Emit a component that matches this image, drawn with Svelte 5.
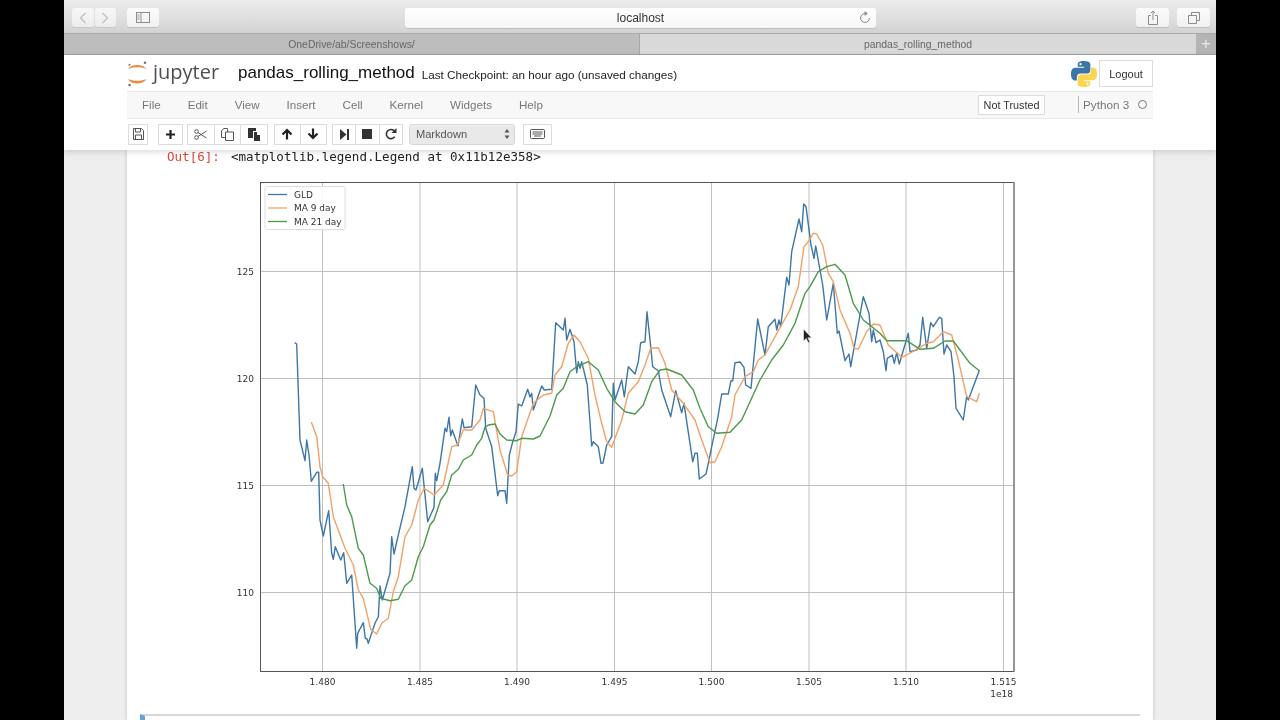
<script>
  const blue = [[294.7,342.7],[296.7,344],[299.3,420],[300,440],[305,460.7],[306.7,440],[309,455],[311.3,481.3],[316.7,472.3],[318.7,472.3],[320,520],[323.3,536],[328.7,510.7],[331.7,553.3],[333.3,559.3],[335.3,546.7],[340.7,560],[343.7,552.7],[346.7,583.3],[351.7,575],[356.7,648.3],[357.7,633.3],[363.3,622.7],[365.3,638.3],[367,639],[368.3,643.3],[375,623.3],[378.3,616.7],[380,586],[382.3,600],[390,573.3],[391.7,536.7],[394,554],[398.3,535],[405,506.7],[412.3,466.7],[414,488.3],[416,490],[422.3,468.3],[427.7,521.7],[434,507.3],[435.3,473.3],[436.7,480.7],[440,463.3],[445,428.3],[446.7,431.7],[449,417.3],[450.7,435.7],[452.3,430],[458,446],[462.3,419],[464,427.7],[471.7,426.7],[475.7,385],[480,395],[484,398.3],[485.7,428.3],[491.7,446.7],[497.7,495.7],[499.3,490.7],[505,490.7],[506.7,503.3],[509.3,455],[512.3,443.3],[516,431.7],[518.3,404],[521.7,406],[527.7,389.3],[530,397],[531.7,393.3],[533.3,410],[541.7,386],[544.3,390],[551.7,389.3],[555.7,322.7],[563.3,330],[565,318.3],[566.7,340],[570,329.3],[574,341.7],[576.7,372.7],[578.3,361.7],[580,368.3],[581.7,361.7],[587.3,385],[591.7,446],[593.3,441.7],[598.3,446.7],[601,463.3],[603,463],[606.7,445],[611.7,436.7],[613.3,383.3],[615,400],[621.7,380],[624.3,396.7],[628.3,366.7],[635,374],[638.3,361.7],[640.7,342.7],[645,341.7],[647,311.7],[650,340],[652.7,366.7],[658.3,370.7],[661.7,390],[670.7,416.7],[675.7,390.7],[681.7,412.7],[684,403.3],[692.7,461.7],[695,453.3],[697.3,453.3],[699.3,479],[706,474],[708.3,463.3],[711.7,446.7],[717.7,418.3],[721.7,394],[728.3,394],[731,380.7],[732.7,380.7],[735,362.7],[740,362],[744,367.3],[745.7,385],[751,388.3],[757.7,319],[765,355],[768.3,326.7],[775,319.3],[776.7,330],[779,320],[780.7,326.7],[786.7,277.3],[789,285],[791.7,251.7],[799,219],[801.7,231.7],[803.7,204],[806,206.7],[811,245],[814,258.3],[815.7,246],[822.7,285],[826.7,320],[833.3,283.3],[837.3,333.3],[839,331],[845,360.7],[849,354],[850.7,366.7],[863.3,296.7],[869,313.3],[871.7,341.7],[873.3,330],[876,342.7],[880,340],[883.3,351.7],[886,370.7],[887.3,358.3],[892.3,355],[894.3,363.3],[896.7,352.7],[899.3,364],[908.3,333.3],[910,351.7],[916.7,350],[920,345],[922.7,317.3],[926.7,348.3],[930.7,322.7],[933.3,326.7],[939.3,317.3],[941.7,318.3],[944,354],[946.7,345],[951,351.7],[954,376.7],[956,408.3],[963.3,420],[966.7,396],[968.3,400],[978.3,373.3],[979.3,370]];
  const orange = [[311.3,422],[316.7,436.7],[320,466.7],[322.7,476.7],[328.3,483.3],[333.3,516.7],[340.7,536.7],[345,548.3],[353.3,565],[358.3,590],[363.3,598.3],[370.7,629.3],[376.7,634],[381.7,623.3],[388.3,618.3],[393.3,591.7],[398.3,576.7],[405,536.7],[411.7,525],[418.3,500],[424.3,488.3],[434,495],[443.3,485],[451.7,446.7],[457.3,445],[463.3,430],[471.7,430],[480,420],[483.3,408.3],[493.3,411.7],[500,450],[507.7,475],[511.7,476],[516.7,471.7],[521.7,436.7],[533.3,403.3],[543.3,395],[551.7,393.3],[555,375],[561.7,366.7],[568.3,343.3],[574,335],[580,341.7],[588.3,358.3],[595,395],[601.7,423.3],[606.7,441.7],[611.7,447.3],[621.7,420],[628.3,393.3],[638.3,381.7],[645,365],[650.7,348.3],[658.3,347.7],[665,363.3],[671.7,390],[683.3,403.3],[695,420],[701.7,440],[710,462.7],[715,461.7],[721.7,446.7],[731.7,416.7],[735,395],[745,376.7],[753.3,371.7],[758.3,360],[765,355],[778.3,330.7],[790,310],[798.3,286.7],[804,246.7],[808.3,241.7],[813.3,233.3],[816.7,234],[822.7,245],[828.3,273.3],[833.3,281.7],[840,310],[850,333.3],[854,348.3],[858.3,349],[866.7,331.7],[873.3,324],[880,325],[888.3,345],[901.7,357.3],[906.7,355],[918.3,348.3],[926.7,343.3],[933.3,341.7],[943.3,331.7],[951.7,335],[958.3,360],[966.7,396.7],[976.7,401.7],[979.3,393.3]];
  const green = [[343.3,484],[346.7,505],[351.7,516.7],[358.3,548.3],[363.3,555],[370,583.3],[376.7,588.3],[380.7,598.3],[390,600.7],[398.3,599.3],[405,585.7],[411.7,580],[418.3,556.7],[423.3,546.7],[430,525],[434,520],[440.7,500],[446.7,491.7],[451.7,475],[458.3,469.3],[463.3,460],[471.7,455],[476.7,445],[481.7,438.3],[485,427.3],[488.3,425],[495,424],[500,434],[506.7,440],[516.7,440.7],[521.7,438.3],[533.3,439],[540,436],[550,416],[556.7,395],[563.3,388.3],[570,371.7],[576.7,366.7],[588.3,361.7],[598.3,370],[606.7,388.3],[615,401.7],[625,411.7],[635,414],[643.3,405],[651.7,381.7],[660,370],[666.7,369],[681.7,375],[693.3,390],[700,408.3],[708.3,426.7],[716.7,433.3],[730,432.3],[741.7,420],[750,401.7],[760,380],[771.7,360],[783.3,345],[795,323.3],[805,293.3],[810,286.7],[818.3,271.7],[826.7,266.7],[835,264.3],[845,275],[853.3,303.3],[863.3,320],[880,333.3],[886.7,340.7],[906.7,340.7],[920,349.3],[933.3,348.3],[945,341],[953.3,341],[970,363.3],[979.3,370.7]];
  const pts = (a) => a.map((p) => p.join(',')).join(' ');
  const vticks = [[322.5,'1.480'],[420,'1.485'],[517,'1.490'],[614.5,'1.495'],[711.5,'1.500'],[809,'1.505'],[906,'1.510'],[1003.5,'1.515']];
  const hticks = [[271.5,'125'],[378.5,'120'],[485.5,'115'],[592.5,'110']];
  const legend = [['GLD','#3f76a5',194.5],['MA 9 day','#f0a268',208],['MA 21 day','#4c9a4c',221.5]];
  const menu = ['File','Edit','View','Insert','Cell','Kernel','Widgets','Help'];
</script>

<div class="page">
  <div class="win">
    <div class="safari">
      <div class="sbtn nav">
        <span class="half"><svg width="8" height="12" viewBox="0 0 8 12"><path d="M6.5 1 1.5 6l5 5" /></svg></span>
        <span class="half"><svg width="8" height="12" viewBox="0 0 8 12"><path d="M1.5 1l5 5-5 5" /></svg></span>
      </div>
      <div class="sbtn side">
        <svg width="14" height="11" viewBox="0 0 14 11"><rect x=".5" y=".5" width="13" height="10" /><path d="M5 .5v10M1.5 3h2M1.5 5h2M1.5 7h2" /></svg>
      </div>
      <div class="url">
        <span>localhost</span>
        <svg class="reload" width="12" height="13" viewBox="0 0 12 13"><path d="M6 2.6a4.4 4.4 0 1 0 4.4 4.4" /><path class="fill" d="M5.6 0v5l3.2-2.5z" /></svg>
      </div>
      <div class="sbtn share">
        <svg width="12" height="15" viewBox="0 0 12 15"><path d="M3.8 5.5H1.5v9h9v-9H8.2M6 10V1M3.8 3.2 6 1l2.2 2.2" /></svg>
      </div>
      <div class="sbtn tabsb">
        <svg width="12" height="12" viewBox="0 0 12 12"><path d="M3.5 3V.5h8v8H9M.5 3.5h8v8h-8z" /></svg>
      </div>
    </div>

    <div class="tabs">
      <div class="tab off">OneDrive/ab/Screenshows/</div>
      <div class="tab on">pandas_rolling_method</div>
      <div class="plus">+</div>
    </div>

    <header class="nbhead">
      <div class="brandrow">
        <svg class="logo" width="22" height="26" viewBox="0 0 22 26">
          <path class="or" d="M1 8C4 2.500 16 2.500 19.500 8 15 5.800 5.500 5.800 1 8z" />
          <path class="or" d="M1 18C5.500 20.400 15 20.400 19.500 18 16 24 4 24 1 18z" />
          <circle class="gr" cx="18" cy="1.800" r="1.300" />
          <circle class="gr" cx="2.500" cy="3.800" r="1" />
          <circle class="gr" cx="2.500" cy="24" r="1.300" />
        </svg>
        <span class="jup">jupyter</span>
        <span class="title">pandas_rolling_method</span>
        <span class="check">Last Checkpoint: an hour ago (unsaved changes)</span>
        <svg class="py" width="26" height="26" viewBox="0 0 110 110">
          <path class="pyb" d="M54.9 0C26.8 0 28.6 12.2 28.6 12.2v12.6h26.8v3.8H17.9S0 26.6 0 54.9s15.7 27.3 15.7 27.3h9.3V69s-.5-15.7 15.4-15.7h26.6s14.9.2 14.9-14.4V14.8S84.2 0 54.9 0zM40.2 8.5a4.8 4.8 0 1 1 0 9.6 4.8 4.8 0 0 1 0-9.6z" />
          <path class="pyy" transform="rotate(180 55 55)" d="M54.9 0C26.8 0 28.6 12.2 28.6 12.2v12.6h26.8v3.8H17.9S0 26.6 0 54.9s15.7 27.3 15.7 27.3h9.3V69s-.5-15.7 15.4-15.7h26.6s14.9.2 14.9-14.4V14.8S84.2 0 54.9 0zM40.2 8.5a4.8 4.8 0 1 1 0 9.6 4.8 4.8 0 0 1 0-9.6z" />
        </svg>
        <button class="logout">Logout</button>
      </div>

      <div class="menubar">
        <nav class="menu">
          {#each menu as m}<span>{m}</span>{/each}
        </nav>
        <button class="trust">Not Trusted</button>
        <span class="kernel">Python 3</span>
        <span class="kdot"></span>
      </div>

      <div class="toolbar">
        <div class="grp"><button class="tb w20" aria-label="save"><svg width="11" height="12" viewBox="0 0 11 12"><path class="ol" d="M.5.5h8l2 2v9H.5zM2.5.5v3.5h5V.5M2.5 11.5V7h6v4.5" /></svg></button></div>
        <div class="grp g2"><button class="tb w25" aria-label="add"><svg width="11" height="11" viewBox="0 0 11 11"><path class="bd" d="M5.5 1v9M1 5.5h9" /></svg></button></div>
        <div class="grp g3">
          <button class="tb w27" aria-label="cut"><svg width="13" height="11" viewBox="0 0 13 11"><circle class="ol" cx="2.5" cy="2.5" r="1.8" /><circle class="ol" cx="2.5" cy="8.5" r="1.8" /><path class="ol" d="M4 3.5 12.5 9M4 7.5 12.5 2" /></svg></button>
          <button class="tb w27" aria-label="copy"><svg width="13" height="13" viewBox="0 0 13 13"><path class="ol" d="M.5 2.5 3 .5h3.500v3.500M.5 2.500V9.500h4M4.500 4h8v8.500h-8z" /></svg></button>
          <button class="tb w27" aria-label="paste"><svg width="12" height="13" viewBox="0 0 12 13"><path class="sol" d="M0 0h8v3H5v7H0zM6 4h3v3h3v6H6z" /></svg></button>
        </div>
        <div class="grp g4">
          <button class="tb w26" aria-label="up"><svg width="12" height="12" viewBox="0 0 12 12"><path class="bd" d="M6 11.500V2M1.500 6.500 6 2l4.500 4.500" /></svg></button>
          <button class="tb w26" aria-label="down"><svg width="12" height="12" viewBox="0 0 12 12"><path class="bd" d="M6 .5V10M1.500 5.500 6 10l4.500-4.500" /></svg></button>
        </div>
        <div class="grp g5">
          <button class="tb w24" aria-label="run"><svg width="9" height="11" viewBox="0 0 9 11"><path class="sol" d="M0 0l6.500 5.500L0 11zM7 0h2v11H7z" /></svg></button>
          <button class="tb w24" aria-label="stop"><svg width="10" height="10" viewBox="0 0 10 10"><rect class="sol" width="10" height="10" /></svg></button>
          <button class="tb w24" aria-label="restart"><svg width="12" height="12" viewBox="0 0 12 12"><path class="bd2" d="M9.800 8.600A4.600 4.600 0 1 1 9.600 3.200" /><path class="sol" d="M11.500 0v5h-5z" /></svg></button>
        </div>
        <div class="select"><span>Markdown</span><svg width="6" height="10" viewBox="0 0 6 10"><path class="sol" d="M3 0l2.500 3.500h-5zM3 10 .5 6.500h5z" /></svg></div>
        <div class="grp g7"><button class="tb w29" aria-label="keyboard"><svg width="15" height="10" viewBox="0 0 15 10"><rect class="ol" x=".5" y=".5" width="14" height="9" rx="1" /><path class="ol" d="M2.500 3h10M2.500 5h10M4 7h7" /></svg></button></div>
      </div>
    </header>

    <main class="sheet">
      <div class="out"><span class="prompt">Out[6]:</span><span class="repr">&lt;matplotlib.legend.Legend at 0x11b12e358&gt;</span></div>
      <svg class="plot" width="800" height="530" viewBox="230 170 800 530">
        {#each vticks as [x]}<line class="grid" x1={x} x2={x} y1="182" y2="671.500" />{/each}
        {#each hticks as [y]}<line class="grid" x1="260.500" x2="1014" y1={y} y2={y} />{/each}
        <polyline class="ln" stroke="#3f76a5" points={pts(blue)} />
        <polyline class="ln" stroke="#f0a268" points={pts(orange)} />
        <polyline class="ln" stroke="#4c9a4c" points={pts(green)} />
        <rect class="frame" x="260.500" y="182.500" width="753.500" height="489" />
        <line class="rspine" x1="1014" x2="1014" y1="182" y2="672" />
        <rect class="lgbox" x="265" y="186.500" width="80" height="43" rx="2" />
        {#each legend as [name, color, y]}
          <line x1="268" x2="287" y1={y} y2={y} stroke={color} stroke-width="1.300" />
          <text class="lab" x="294" y={y + 3.300}>{name}</text>
        {/each}
        {#each vticks as [x, t]}<text class="lab" x={x} y="685" text-anchor="middle">{t}</text>{/each}
        {#each hticks as [y, t]}<text class="lab" x="254" y={y + 3.500} text-anchor="end">{t}</text>{/each}
        <text class="lab" x="1013" y="696.500" text-anchor="end">1e18</text>
        <path class="cursor" d="M803.500 329v12l2.700-2.600 2 4.300 1.600-.8-2-4.200h3.700z" />
      </svg>
      <div class="nextcell"></div>
    </main>
  </div>
</div>

<style>
  :global(body) { margin: 0; background: #000; }
  .page { width: 1280px; height: 720px; background: #000; display: flex; justify-content: center; overflow: hidden; font-family: "Liberation Sans", Arial, sans-serif; }
  .win { width: 1152px; height: 720px; background: #eeeeee; display: flex; flex-direction: column; filter: blur(0.35px); overflow: hidden; }
  svg { display: block; }
  .sbtn svg path, .sbtn svg rect, .url svg path { fill: none; }

  .safari { flex: none; height: 33px; box-sizing: border-box; padding-top: 8px; display: flex; align-items: flex-start; background: linear-gradient(#ececec, #d3d3d3); }
  .sbtn { height: 19px; background: linear-gradient(#fbfbfb, #f1f1f1); border-radius: 3px; box-shadow: 0 1px 0 #bdbdbd; display: flex; align-items: center; justify-content: center; }
  .sbtn svg path, .sbtn svg rect { stroke: #8c8c8c; stroke-width: 1; }
  .nav { width: 44px; margin-left: 8px; background: none; box-shadow: none; gap: 1px; }
  .half { flex: 1; height: 19px; background: linear-gradient(#f7f7f7, #ececec); border-radius: 3px; box-shadow: 0 1px 0 #c8c8c8; display: flex; align-items: center; justify-content: center; }
  .half svg path { stroke: #bdbdbd; stroke-width: 1.200; }
  .side { width: 32px; margin-left: 11px; }
  .url { width: 471px; height: 20px; margin-left: 246px; position: relative; background: linear-gradient(#ffffff, #f6f6f6); border-radius: 3px; box-shadow: 0 1px 0 #bcbcbc; display: flex; align-items: center; justify-content: center; font-size: 12px; color: #333; }
  .reload { position: absolute; right: 5px; top: 3px; }
  .reload path { stroke: #8a8a8a; stroke-width: 1; }
  .url .reload path.fill { fill: #8a8a8a; stroke: none; }
  .share { width: 33px; margin-left: 260px; }
  .tabsb { width: 33px; margin-left: 8px; }

  .tabs { flex: none; height: 22px; box-sizing: border-box; display: flex; border-top: 1px solid #a9a9a9; border-bottom: 1px solid #9f9f9f; font-size: 10.400px; color: #666; }
  .tab { display: flex; align-items: center; justify-content: center; }
  .off { width: 576px; background: #bdbdbd; box-sizing: border-box; border-right: 1px solid #a6a6a6; }
  .on { width: 556px; background: #d9d9d9; }
  .plus { width: 20px; background: #b4b4b4; color: #e8e8e8; font-size: 17px; font-weight: 300; line-height: 20px; text-align: center; }

  .nbhead { flex: none; background: #fff; box-shadow: 0 2px 6px rgba(0,0,0,.14); position: relative; z-index: 2; height: 95px; }
  .brandrow { height: 36px; box-sizing: border-box; margin-left: 63px; width: 1026px; display: flex; align-items: center; padding-top: 1px; }
  .logo { margin-top: 1px; }
  .logo .or { fill: #f0883f; }
  .logo .gr { fill: #767677; }
  .jup { font-family: "Open Sans", sans-serif; font-size: 20px; color: #4e4e4e; margin-left: 4px; margin-top: -5px; width: 85px; }
  .title { font-size: 17px; color: #111; margin-top: -1px; }
  .check { font-size: 11.700px; color: #222; margin-left: 7px; margin-top: 2px; }
  .py { margin-left: auto; }
  .pyb { fill: #3b75a8; }
  .pyy { fill: #fbd44f; }
  .logout { width: 54px; height: 27px; margin-left: 2px; background: #fff; border: 1px solid #dcdcdc; font: 11px "Liberation Sans", Arial, sans-serif; color: #333; padding: 0; }

  .menubar { height: 28px; margin-left: 63px; width: 1026px; box-sizing: border-box; background: #f8f8f8; border-top: 1px solid #e7e7e7; border-bottom: 1px solid #e7e7e7; display: flex; align-items: center; padding-bottom: 1px; }
  .menu { display: flex; gap: 27px; margin-left: 15px; font-size: 11.600px; color: #777; }
  .trust { width: 67px; height: 20px; margin-left: auto; margin-top: 1px; background: #fff; border: 1px solid #dcdcdc; font: 10.800px "Liberation Sans", Arial, sans-serif; color: #333; padding: 0; }
  .kernel { margin-left: 33px; padding-left: 4px; border-left: 1px solid #bbb; font-size: 11.700px; color: #777; line-height: 17px; width: 51px; }
  .kdot { width: 7px; height: 7px; border: 1px solid #777; border-radius: 50%; margin-left: 4px; margin-right: 6px; }

  .toolbar { height: 31px; margin-left: 64px; display: flex; align-items: center; padding-bottom: 1px; box-sizing: border-box; }
  .grp { display: flex; }
  .g2 { margin-left: 10px; }
  .g3 { margin-left: 4px; }
  .g4 { margin-left: 6px; }
  .g5 { margin-left: 5px; }
  .g7 { margin-left: 8px; }
  .tb { height: 21px; background: #fff; border: 1px solid #dcdcdc; margin-left: -1px; padding: 0; display: flex; align-items: center; justify-content: center; }
  .grp .tb:first-child { margin-left: 0; }
  .w20 { width: 20px; } .w25 { width: 25px; } .w27 { width: 27.670px; } .w26 { width: 27px; } .w24 { width: 24.330px; } .w29 { width: 29px; }
  .tb svg .ol { stroke: #555; stroke-width: 1; fill: none; }
  .tb svg .bd { stroke: #222; stroke-width: 2.200; fill: none; }
  .tb svg .bd2 { stroke: #333; stroke-width: 1.600; fill: none; }
  .tb svg .sol { fill: #333; }
  .select { width: 106px; height: 21px; margin-left: 6px; box-sizing: border-box; background: #e9e9e9; border: 1px solid #d6d6d6; border-radius: 3px; box-shadow: inset 0 1px 0 #f4f4f4; display: flex; align-items: center; justify-content: space-between; padding: 0 4px 0 6px; font-size: 11.100px; color: #555; }
  .select svg .sol { fill: #555; }

  .sheet { flex: 1; min-height: 0; width: 1026px; margin-left: 63px; background: #fff; box-shadow: 0 0 4px rgba(0,0,0,.18); overflow: hidden; }
  .out { height: 14px; padding: 0 0 0 40px; box-sizing: border-box; font: 12.550px/14px "DejaVu Sans Mono", monospace; display: flex; }
  .prompt { color: #d84a3a; width: 64px; }
  .repr { color: #222; }
  .plot { margin: 6px 0 0 103px; }
  .grid { stroke: #bfbfbf; stroke-width: 1; }
  .ln { fill: none; stroke-width: 1.400; stroke-linejoin: round; }
  .plot .frame { fill: none; stroke: #555; stroke-width: 1; }
  .rspine { stroke: #8f8f8f; stroke-width: 1.500; }
  .plot .lgbox { fill: rgba(255,255,255,.85); stroke: #dedede; stroke-width: 1; }
  .lab { font: 9px "DejaVu Sans", sans-serif; fill: #333; }
  .plot .cursor { fill: #222; stroke: #fff; stroke-width: .5; }
  .nextcell { margin: 14px 0 0 13px; width: 1000px; height: 20px; box-sizing: border-box; border-top: 2px solid #d8d8d8; border-left: 5px solid #66a3d2; }
</style>
